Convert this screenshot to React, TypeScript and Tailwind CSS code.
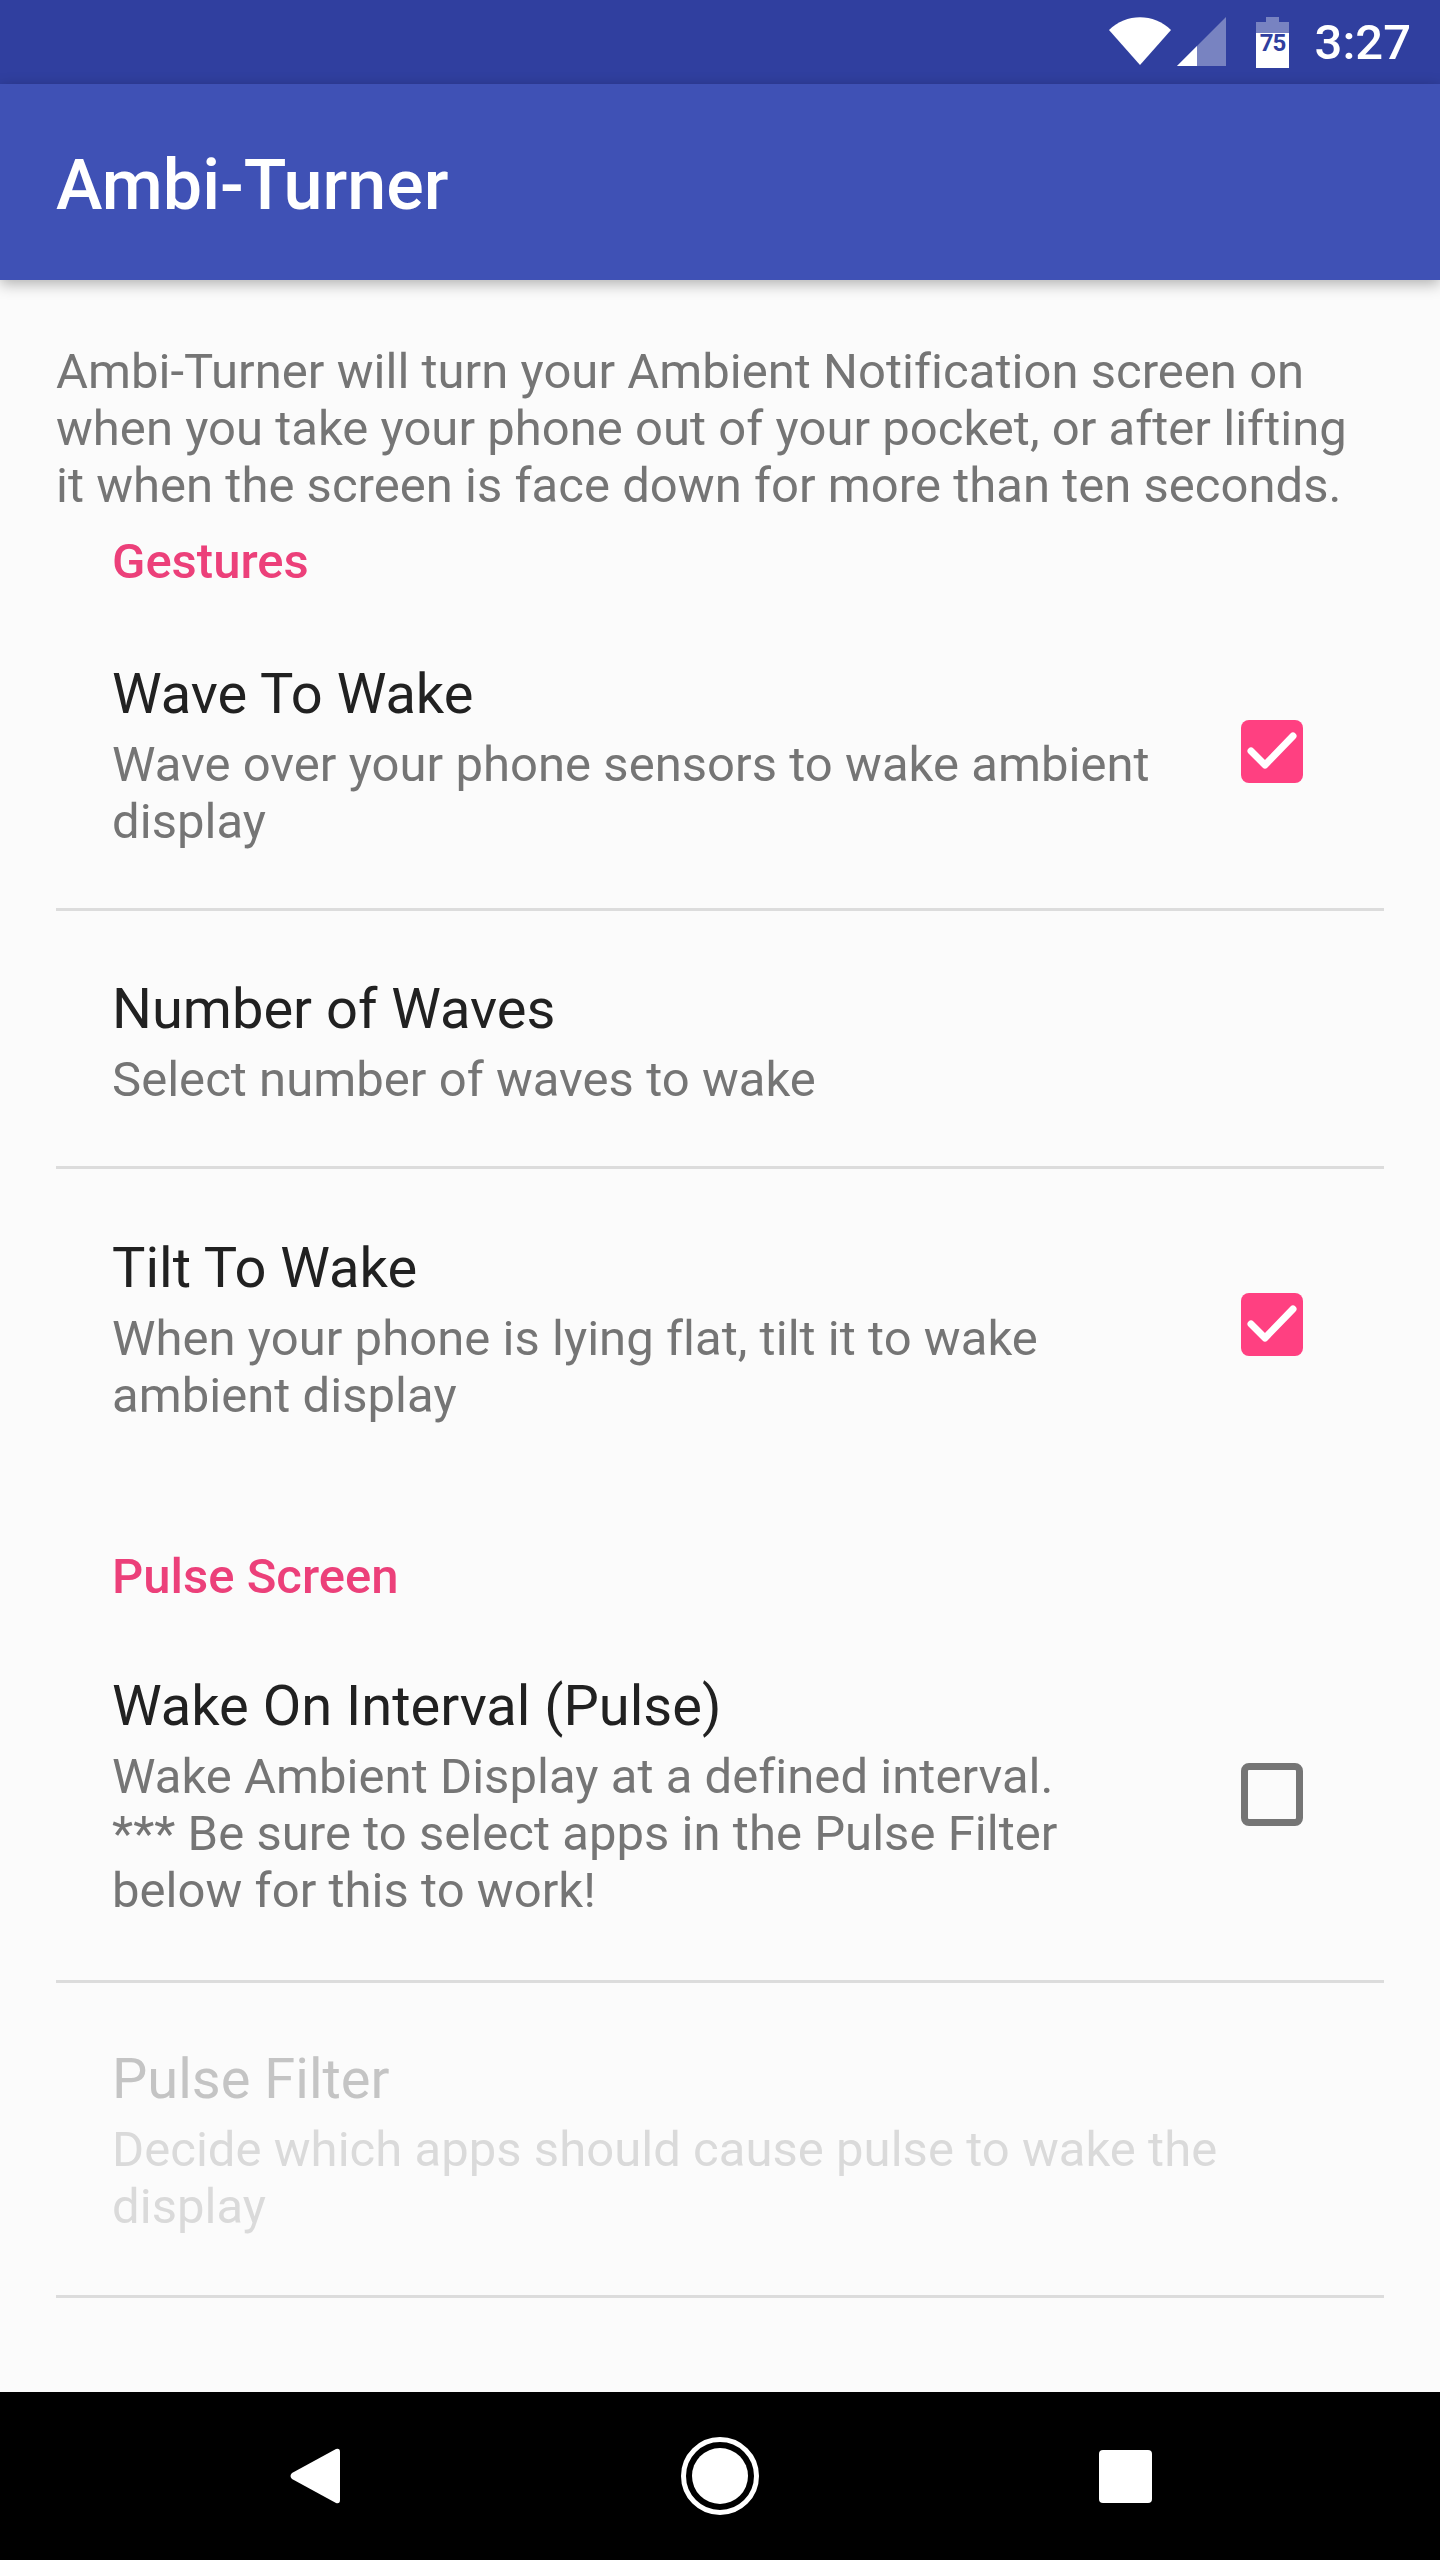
import * as React from "react";

function Divider() {
  return <div className="mx-14 h-[3px] bg-[#dcdcdc]" />;
}

function Checkbox({ checked }: { checked: boolean }) {
  if (!checked) {
    return <div className="h-[63px] w-[62px] shrink-0 rounded-[8px] border-[7px] border-[#757575]" />;
  }
  return (
    <div className="mb-[6px] h-[63px] w-[62px] shrink-0 rounded-[8px] bg-[#ff4081]">
      <svg width="62" height="63" viewBox="0 0 62 63" fill="none">
        <path d="M10 31 L24 45 L52 16" stroke="#fff" strokeWidth="7" strokeLinecap="round" strokeLinejoin="round" />
      </svg>
    </div>
  );
}

function Row({
  title,
  summary,
  checked,
  disabled,
  className,
}: {
  title: string;
  summary: string;
  checked?: boolean;
  disabled?: boolean;
  className: string;
}) {
  const hasBox = checked !== undefined;
  return (
    <div className={"flex items-center pl-[112px] " + className}>
      <div className={hasBox ? "w-[1060px]" : "w-[1180px]"}>
        <div className={"text-[56px] leading-[72px] " + (disabled ? "text-[#c4c4c4]" : "text-[#212121]")}>{title}</div>
        <div
          className={
            "mt-[6px] whitespace-pre-line text-[49px] leading-[57px] tracking-[0.04px] " +
            (disabled ? "text-[#dadada]" : "text-[#757575]")
          }
        >
          {summary}
        </div>
      </div>
      {hasBox && (
        <div className="ml-[69px]">
          <Checkbox checked={checked} />
        </div>
      )}
    </div>
  );
}

function StatusBar() {
  return (
    <div className="flex h-[84px] shrink-0 items-center justify-end bg-[#303f9f] pr-[29px] text-white">
      <svg width="62" height="48" viewBox="0 0 62 48" className="mb-[2px]">
        <path d="M0 13 C17 -4 45 -4 62 13 L31 48 Z" fill="#fff" />
      </svg>
      <svg width="49" height="49" viewBox="0 0 49 49" className="mb-[1px] ml-[6px]">
        <path d="M49 0 V49 H0 Z" fill="#7883c1" />
        <path d="M20 29 V49 H0 Z" fill="#fff" />
      </svg>
      <svg width="33" height="51" viewBox="0 0 33 51" className="ml-[30px]">
        <path d="M10 0 H23 V5 H33 V16 H0 V5 H10 Z" fill="#7883c1" />
        <path d="M0 16 H33 V51 H0 Z" fill="#fff" />
        <text
          x="16.5"
          y="34"
          textAnchor="middle"
          fontFamily="Roboto, sans-serif"
          fontSize="24"
          fontWeight="700"
          letterSpacing="-1"
          fill="#303f9f"
        >
          75
        </text>
      </svg>
      <span className="ml-[26px] text-[49px] leading-none font-medium">3:27</span>
    </div>
  );
}

function NavBar() {
  return (
    <div className="flex h-[168px] shrink-0 items-center bg-black pl-[290px]">
      <svg width="50" height="56" viewBox="0 0 50 56">
        <path d="M46 1 L2 25 Q-1 28 2 31 L46 55 Q50 56 50 52 V4 Q50 0 46 1 Z" fill="#fff" />
      </svg>
      <svg width="78" height="80" viewBox="0 0 78 80" className="ml-[341px]">
        <circle cx="39" cy="40" r="36.5" fill="none" stroke="#fff" strokeWidth="5" />
        <circle cx="39" cy="40" r="28" fill="#fff" />
      </svg>
      <div className="ml-[340px] h-[53px] w-[53px] rounded-[4px] bg-white" />
    </div>
  );
}

export default function App() {
  return (
    <div className="flex h-[2560px] w-[1440px] flex-col overflow-hidden bg-[#fbfbfb] font-['Roboto',sans-serif]">
      <StatusBar />
      <header className="z-10 flex h-[196px] shrink-0 items-center bg-[#3f51b5] pt-[6px] pl-14 shadow-[0_4px_14px_rgba(0,0,0,0.3)]">
        <h1 className="text-[70px] leading-none font-medium text-white">Ambi-Turner</h1>
      </header>
      <main className="min-h-0 flex-1 overflow-hidden">
        <p className="mt-[63px] px-14 text-[49px] leading-[57px] tracking-[0.03px] text-[#757575]">
          Ambi-Turner will turn your Ambient Notification screen on
          <br />
          when you take your phone out of your pocket, or after lifting
          <br />
          it when the screen is face down for more than ten seconds.
        </p>
        <h2 className="mt-[19px] pl-[112px] text-[49px] leading-[57px] font-medium text-[#ec407a]">Gestures</h2>
        <Row
          className="h-[318px] pt-[10px]"
          title="Wave To Wake"
          summary="Wave over your phone sensors to wake ambient display"
          checked={true}
        />
        <Divider />
        <Row className="h-[255px] pt-[4px]" title="Number of Waves" summary="Select number of waves to wake" />
        <Divider />
        <Row
          className="h-[313px] pt-[4px]"
          title="Tilt To Wake"
          summary="When your phone is lying flat, tilt it to wake ambient display"
          checked={true}
        />
        <h2 className="mt-[66px] pl-[112px] text-[49px] leading-[57px] font-medium text-[#ec407a]">Pulse Screen</h2>
        <Row
          className="h-[375px] pt-[4px]"
          title="Wake On Interval (Pulse)"
          summary={"Wake Ambient Display at a defined interval.\n*** Be sure to select apps in the Pulse Filter below for this to work!"}
          checked={false}
        />
        <Divider />
        <Row
          className="h-[312px]"
          title="Pulse Filter"
          summary="Decide which apps should cause pulse to wake the display"
          disabled
        />
        <Divider />
      </main>
      <NavBar />
    </div>
  );
}
